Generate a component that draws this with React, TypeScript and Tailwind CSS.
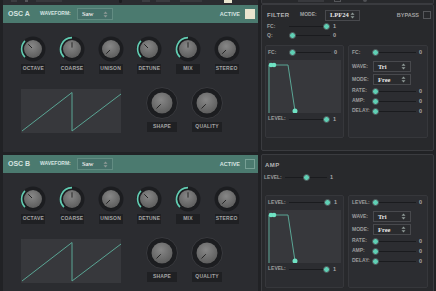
import React from "react";

const TEAL = "#62ccb2";

type KnobProps = { size: number; inner: number; angle: number; arc?: boolean; ring?: boolean };

function Knob({ size, inner, angle, arc, ring }: KnobProps) {
  const c = size / 2;
  const pt = (r: number, a: number) => {
    const t = (a * Math.PI) / 180;
    return [c + r * Math.sin(t), c - r * Math.cos(t)];
  };
  const ra = c - 1.6;
  const [sx, sy] = pt(ra, -135);
  const [ex, ey] = pt(ra, angle);
  const big = angle + 135 > 180 ? 1 : 0;
  const [ax, ay] = pt(inner * 0.2, angle);
  const [bx, by] = pt(inner * 0.7, angle);
  return (
    <svg width={size} height={size} viewBox={`0 0 ${size} ${size}`}>
      <defs>
        <radialGradient id="knobFace" cx="45%" cy="35%" r="70%">
          <stop offset="0%" stopColor="#878787" />
          <stop offset="100%" stopColor="#5a5a5a" />
        </radialGradient>
      </defs>
      <circle cx={c} cy={c} r={c - 0.5} fill="#1c1d20" stroke={ring ? "#393a3e" : "none"} />
      {arc && (
        <path
          d={`M${sx} ${sy} A${ra} ${ra} 0 ${big} 1 ${ex} ${ey}`}
          stroke={TEAL}
          strokeWidth={1.6}
          fill="none"
        />
      )}
      <circle cx={c} cy={c + 0.6} r={inner} fill="#141517" opacity={0.6} />
      <circle cx={c} cy={c} r={inner} fill="url(#knobFace)" />
      <line x1={ax} y1={ay} x2={bx} y2={by} stroke="#262626" strokeWidth={1} strokeLinecap="round" />
    </svg>
  );
}

function Chip({ children, className }: { children: React.ReactNode; className: string }) {
  return (
    <div className={`flex h-[10px] items-center justify-center bg-[#1f2023] text-[5px] font-bold tracking-[0.2px] text-[#a6a6a6] ${className}`}>
      {children}
    </div>
  );
}

function UpDown() {
  return (
    <svg width="5" height="7" viewBox="0 0 5 7">
      <path d="M2.5 0.5 L4.5 2.8 H0.5 Z M2.5 6.5 L4.5 4.2 H0.5 Z" fill="#8f9a97" />
    </svg>
  );
}

function Select({ value, className }: { value: string; className: string }) {
  return (
    <div className={`flex items-center justify-between border pl-[4px] pr-[4px] ${className}`}>
      <span className="font-['Liberation_Serif',serif] text-[6.5px] font-bold text-[#e6e6e6]">{value}</span>
      <UpDown />
    </div>
  );
}

function Slider({
  label,
  labelW,
  trackW,
  pos,
  value,
  className = "",
}: {
  label: string;
  labelW: string;
  trackW: string;
  pos: number;
  value: string;
  className?: string;
}) {
  return (
    <div className={`flex items-center ${className}`}>
      <span className={`${labelW} text-[5px] font-bold text-[#9d9d9d]`}>{label}</span>
      <div className={`relative h-[1px] bg-[#1a1b1e] ${trackW}`}>
        <div
          className="absolute top-[-3px] h-[7px] w-[7px] rounded-full border-[1.5px] border-[#505155] bg-[#5fd0b5]"
          style={{ left: `calc(${pos} * (100% - 7px))` }}
        />
      </div>
      <span className="ml-[3px] text-[5.5px] font-bold text-[#a8a8a8]">{value}</span>
    </div>
  );
}

const knobs = [
  { label: "OCTAVE", angle: -45, arc: true },
  { label: "COARSE", angle: 0, arc: true },
  { label: "UNISON", angle: -135, arc: false },
  { label: "DETUNE", angle: -45, arc: true },
  { label: "MIX", angle: 0, arc: true },
  { label: "STEREO", angle: -135, arc: false },
];

function Saw() {
  return (
    <svg width="100" height="44" viewBox="0 0 100 44" className="bg-[#37383c]">
      <polyline points="1,42 51,3.5 51,42 100,5" fill="none" stroke="#5aa594" strokeWidth="1" />
    </svg>
  );
}

function Osc({ name, active }: { name: string; active?: boolean }) {
  return (
    <div className="flex h-[147px] flex-col bg-[#2b2c30]">
      <div className="flex h-[18px] items-center bg-[#4b7a6f] pl-[5px] pr-[3px] text-[#d6e4e0]">
        <span className="w-[32px] text-[7px] font-bold">{name}</span>
        <span className="w-[37px] text-[5px] font-bold">WAVEFORM:</span>
        <Select value="Saw" className="h-[12px] w-[36px] border-[#628c82] bg-[#46716a]" />
        <span className="ml-auto text-[5.5px] font-bold">ACTIVE</span>
        <div
          className={`ml-[5px] h-[10px] w-[10px] ${
            active ? "bg-[#e9e5cf]" : "border border-[#77a095] bg-[#4b7a6f]"
          }`}
        />
      </div>
      <div className="grid w-[243px] grid-cols-6 pl-[11px] pt-[13px]">
        {knobs.map((k) => (
          <div key={k.label} className="flex flex-col items-center gap-[2px]">
            <Knob size={26} inner={9} angle={k.angle} arc={k.arc} />
            <Chip className="w-[24px]">{k.label}</Chip>
          </div>
        ))}
      </div>
      <div className="mt-[13px] flex items-start pl-[18px]">
        <div className="mt-[2px]">
          <Saw />
        </div>
        <div className="ml-[23px] flex gap-[9px]">
          {["SHAPE", "QUALITY"].map((l) => (
            <div key={l} className="flex w-[36px] flex-col items-center gap-[3px]">
              <Knob size={32} inner={10.5} angle={-135} ring />
              <Chip className="w-[30px]">{l}</Chip>
            </div>
          ))}
        </div>
      </div>
    </div>
  );
}

function Envelope() {
  return (
    <svg width="73" height="53" viewBox="0 0 73 53" className="bg-[#37383c]">
      <line x1="1" y1="5" x2="1" y2="53" stroke="#5aa594" strokeWidth="1" />
      <polyline points="2,5 20,5 27,51" fill="none" stroke="#5aa594" strokeWidth="1" />
      <circle cx="3" cy="5" r="2.3" fill="#6fe3c4" />
      <circle cx="6" cy="5" r="2.3" fill="#6fe3c4" />
      <circle cx="27" cy="51" r="2.5" fill="#6fe3c4" />
    </svg>
  );
}

function SubPanels({ first }: { first: string }) {
  return (
    <div className="flex gap-[4px] px-[3px]">
      <div className="h-[93px] w-[79px] rounded-[2px] border border-[#36373b] bg-[#2c2d31] pl-[2px] pt-[2px]">
        <Slider label={`${first}:`} labelW="w-[21px]" trackW="w-[42px]" pos={first === "FC" ? 0 : 1} value={first === "FC" ? "0" : "1"} className="h-[9px]" />
        <div className="mt-[3px]">
          <Envelope />
        </div>
        <Slider label="LEVEL:" labelW="w-[21px]" trackW="w-[41px]" pos={1} value="1" className="mt-[1px] h-[10px]" />
      </div>
      <div className="h-[93px] w-[80px] rounded-[2px] border border-[#36373b] bg-[#2c2d31] pl-[3px] pt-[2px]">
        <Slider label={`${first}:`} labelW="w-[20px]" trackW="w-[44px]" pos={0} value="0" className="h-[9px]" />
        <div className="mt-[4px] flex h-[11px] items-center">
          <span className="w-[21px] text-[5px] font-bold text-[#9d9d9d]">WAVE:</span>
          <Select value="Tri" className="h-[11px] w-[38px] border-[#48494d] bg-[#2a2b2e]" />
        </div>
        <div className="mt-[2px] flex h-[11px] items-center">
          <span className="w-[21px] text-[5px] font-bold text-[#9d9d9d]">MODE:</span>
          <Select value="Free" className="h-[11px] w-[38px] border-[#48494d] bg-[#2a2b2e]" />
        </div>
        <Slider label="RATE:" labelW="w-[20px]" trackW="w-[44px]" pos={0} value="0" className="mt-[1px] h-[10px]" />
        <Slider label="AMP:" labelW="w-[20px]" trackW="w-[44px]" pos={0} value="0" className="h-[10px]" />
        <Slider label="DELAY:" labelW="w-[20px]" trackW="w-[44px]" pos={0} value="0" className="h-[10px]" />
      </div>
    </div>
  );
}

function Filter() {
  return (
    <div className="h-[147px] rounded-[2px] border border-[#3a3b3f] bg-[#28292c] pt-[5px]">
      <div className="flex h-[10px] items-center pl-[5px] pr-[2px]">
        <span className="w-[33px] text-[6px] font-bold tracking-[0.3px] text-[#b4b4b4]">FILTER</span>
        <span className="w-[25px] text-[5px] font-bold text-[#a3a3a3]">MODE:</span>
        <Select value="LPF24" className="h-[11px] w-[35px] border-[#48494d] bg-[#2a2b2e]" />
        <span className="ml-auto text-[5.5px] font-bold text-[#a3a3a3]">BYPASS</span>
        <div className="ml-[4px] h-[8px] w-[8px] border border-[#55565a]" />
      </div>
      <div className="mt-[2px] pl-[5px]">
        <Slider label="FC:" labelW="w-[22px]" trackW="w-[41px]" pos={1} value="1" className="h-[9px]" />
        <Slider label="Q:" labelW="w-[22px]" trackW="w-[41px]" pos={0} value="0" className="h-[9px]" />
      </div>
      <div className="mt-[5px]">
        <SubPanels first="FC" />
      </div>
    </div>
  );
}

function Amp() {
  return (
    <div className="h-[140px] rounded-[2px] border border-[#3a3b3f] bg-[#28292c] pt-[5px]">
      <div className="flex h-[10px] items-center pl-[3px]">
        <span className="text-[6px] font-bold tracking-[0.5px] text-[#b4b4b4]">AMP</span>
      </div>
      <div className="mt-[3px] pl-[2px]">
        <Slider label="LEVEL:" labelW="w-[21px]" trackW="w-[42px]" pos={0.5} value="1" className="h-[9px]" />
      </div>
      <div className="mt-[13px]">
        <SubPanels first="LEVEL" />
      </div>
    </div>
  );
}

function TopStrip() {
  return (
    <div className="flex h-[5px]">
      <div className="ml-[3px] flex h-[5px] w-[255px] items-start bg-[#2b2c30]">
        <div className="ml-[8px] h-[2px] w-[6px] bg-[#3c3d41]" />
        <div className="ml-[8px] h-[2px] w-[3px] bg-[#55565a]" />
        <div className="ml-[8px] h-[2px] w-[26px] bg-[#38393d]" />
        <div className="ml-[57px] h-[3px] w-[3px] rounded-b-full bg-[#1c1d20]" />
        <div className="ml-[20px] h-[2px] w-[8px] bg-[#3c3d41]" />
        <div className="ml-[6px] h-[2px] w-[14px] bg-[#3a3b3f]" />
        <div className="ml-[10px] h-[2px] w-[22px] bg-[#38393d]" />
        <div className="ml-[22px] h-[3px] w-[8px] bg-[#e9e5cf]" />
      </div>
      <div className="ml-[3px] h-[4px] w-[173px] rounded-b-[2px] border-x border-b border-[#3a3b3f] bg-[#28292c]">
        <div className="ml-[36px] flex items-start">
          <div className="h-[2px] w-[26px] bg-[#38393d]" />
          <div className="ml-[10px] h-[2px] w-[7px] border-x border-b border-[#55565a]" />
          <div className="ml-[22px] h-[2px] w-[4px] rounded-b-full bg-[#505155]" />
        </div>
      </div>
    </div>
  );
}

export default function App() {
  return (
    <div className="h-[291px] w-[436px] overflow-hidden bg-[#212225] font-['Liberation_Sans',Arial,sans-serif]">
      <TopStrip />
      <div className="flex">
        <div className="ml-[3px] flex w-[255px] flex-col gap-[3px]">
          <Osc name="OSC A" active />
          <Osc name="OSC B" />
        </div>
        <div className="ml-[3px] mt-[-1px] flex w-[173px] flex-col gap-[3px]">
          <Filter />
          <Amp />
        </div>
      </div>
    </div>
  );
}
